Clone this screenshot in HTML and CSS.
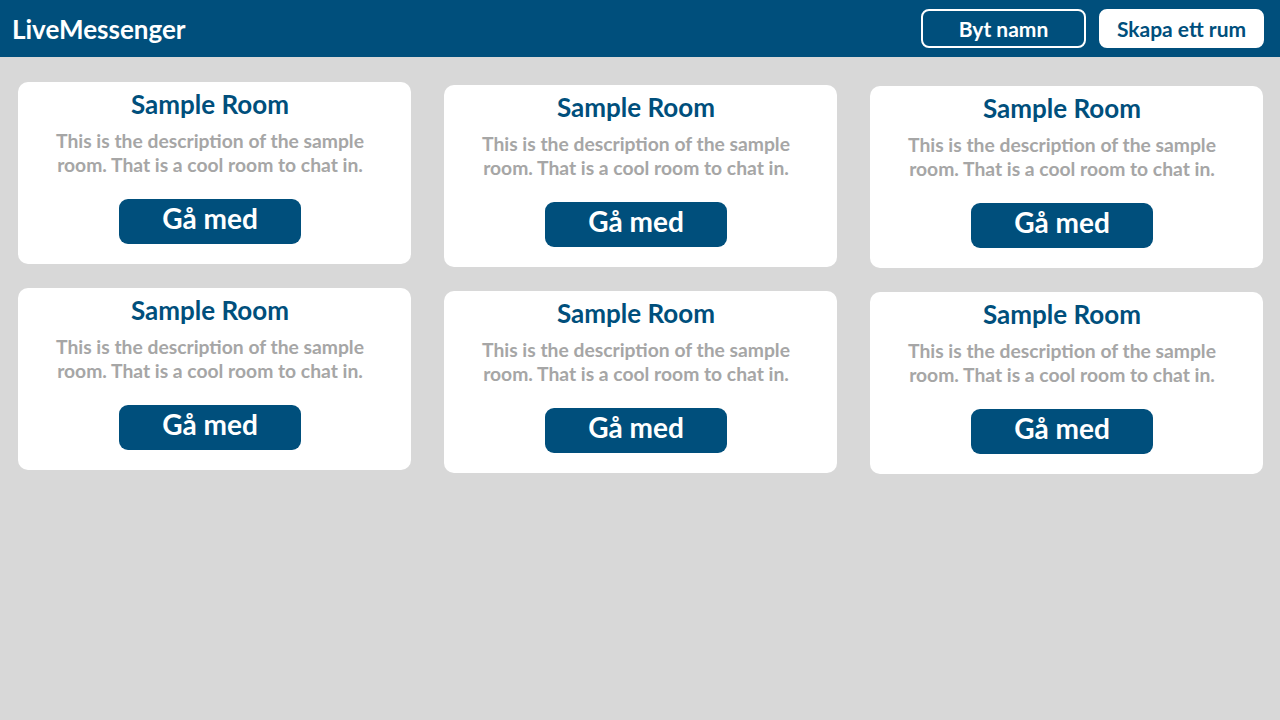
FILE: index.html
```html
<!DOCTYPE html>
<html lang="sv">
<head>
<meta charset="utf-8">
<title>LiveMessenger</title>
<link rel="stylesheet" href="styles.css">
</head>
<body>
<header class="topbar">
  <div class="brand">LiveMessenger</div>
  <div class="actions">
    <button class="btn btn-outline">Byt namn</button>
    <button class="btn btn-solid">Skapa ett rum</button>
  </div>
</header>
<main class="rooms">
  <div class="card">
    <h2 class="card-title">Sample Room</h2>
    <p class="card-desc">This is the description of the sample room. That is a cool room to chat in.</p>
    <button class="join">Gå med</button>
  </div>
  <div class="card">
    <h2 class="card-title">Sample Room</h2>
    <p class="card-desc">This is the description of the sample room. That is a cool room to chat in.</p>
    <button class="join">Gå med</button>
  </div>
  <div class="card">
    <h2 class="card-title">Sample Room</h2>
    <p class="card-desc">This is the description of the sample room. That is a cool room to chat in.</p>
    <button class="join">Gå med</button>
  </div>
  <div class="card">
    <h2 class="card-title">Sample Room</h2>
    <p class="card-desc">This is the description of the sample room. That is a cool room to chat in.</p>
    <button class="join">Gå med</button>
  </div>
  <div class="card">
    <h2 class="card-title">Sample Room</h2>
    <p class="card-desc">This is the description of the sample room. That is a cool room to chat in.</p>
    <button class="join">Gå med</button>
  </div>
  <div class="card">
    <h2 class="card-title">Sample Room</h2>
    <p class="card-desc">This is the description of the sample room. That is a cool room to chat in.</p>
    <button class="join">Gå med</button>
  </div>
</main>
</body>
</html>
```
FILE: styles.css
```css
* { box-sizing: border-box; }
html, body { margin: 0; padding: 0; }
body {
  background: #d8d8d8;
  font-family: Lato, "Noto Sans", sans-serif;
  font-weight: 700;
  height: 720px;
}
.topbar {
  height: 57px;
  background: #004f7c;
  display: flex;
  align-items: center;
  justify-content: space-between;
  padding: 0 16px 0 12px;
}
.brand {
  color: #fff;
  font-size: 26px;
  font-weight: 700;
}
.actions {
  display: flex;
  gap: 13px;
}
.btn {
  width: 165px;
  height: 39px;
  border-radius: 8px;
  font-family: inherit;
  font-weight: 700;
  font-size: 21px;
  cursor: pointer;
}
.btn-outline {
  background: transparent;
  color: #fff;
  border: 2px solid #fff;
}
.btn-solid {
  background: #fff;
  color: #004f7c;
  border: 2px solid #fff;
}
.rooms {
  display: grid;
  grid-template-columns: repeat(3, 1fr);
  column-gap: 33px;
  row-gap: 20px;
  padding: 25px 17px 0 18px;
  align-items: start;
}
.card {
  background: #fff;
  border-radius: 10px;
  padding: 8px 9px 20px 0;
  display: flex;
  flex-direction: column;
  align-items: center;
  height: 182px;
}
.card:nth-child(3n+2) { margin-top: 3px; }
.card:nth-child(3n) { margin-top: 4px; }
.card-title {
  margin: 0;
  font-size: 26px;
  line-height: 28px;
  color: #004f7c;
  font-weight: 700;
}
.card-desc {
  margin: 11px 0 0;
  max-width: 322px;
  text-align: center;
  font-size: 19.3px;
  line-height: 24px;
  color: #a6a6a6;
}
.join {
  margin-top: 22px;
  width: 182px;
  height: 45px;
  border: none;
  border-radius: 9px;
  background: #004f7c;
  color: #fff;
  font-family: inherit;
  font-weight: 700;
  font-size: 28px;
  line-height: 39px;
  padding: 0 0 6px;
}
```
